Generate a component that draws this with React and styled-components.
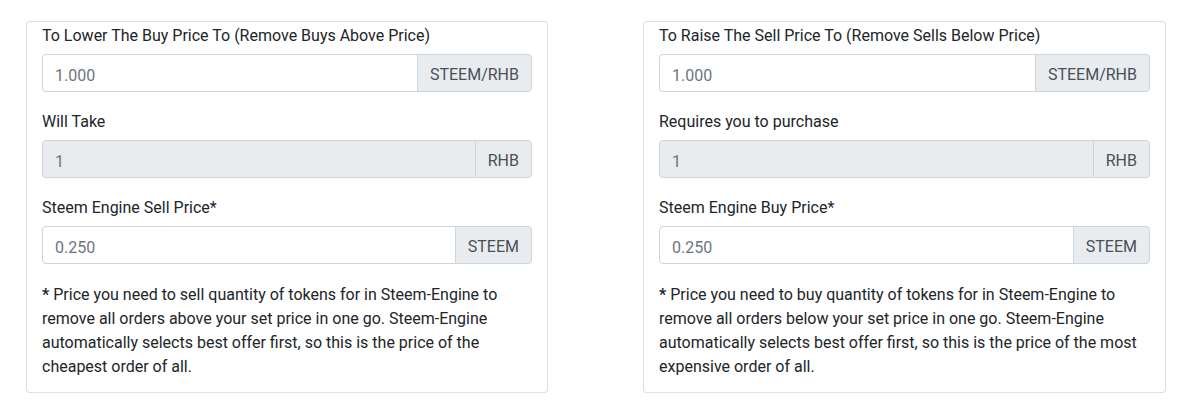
import React from "react";
import styled, { createGlobalStyle } from "styled-components";

const GlobalStyle = createGlobalStyle`
  html, body {
    margin: 0;
    padding: 0;
    background: #ffffff;
  }
  body {
    font-family: Roboto, "Liberation Sans", Arial, sans-serif;
    font-size: 16px;
    line-height: 24px;
    color: #212529;
  }
  * { box-sizing: border-box; }
`;

const Page = styled.div`
  display: grid;
  grid-template-columns: 522px 523px;
  column-gap: 95px;
  padding: 21px 0 0 26px;
  align-items: start;
`;

const Card = styled.div`
  border: 1px solid rgba(0, 0, 0, 0.125);
  border-radius: 4px;
  padding: 0 15px;
  background: #fff;
`;

const Group = styled.div`
  margin-bottom: 16px;
`;

const Label = styled.label`
  display: block;
  padding-top: 2px;
  margin-bottom: 6px;
  color: #212529;
`;

const InputGroup = styled.div`
  display: flex;
  align-items: stretch;
  width: 100%;
`;

const Input = styled.input`
  flex: 1 1 auto;
  min-width: 0;
  height: 38px;
  padding: 8px 12px 4px;
  font-family: inherit;
  font-size: 16px;
  line-height: 24px;
  color: #495057;
  background: ${(p) => (p.disabled ? "#e9ecef" : "#fff")};
  border: 1px solid #ced4da;
  border-radius: 4px 0 0 4px;
  outline: none;
  &::placeholder {
    color: #6c757d;
    opacity: 1;
  }
`;

const Addon = styled.span`
  display: flex;
  align-items: center;
  margin-left: -1px;
  padding: 8px 12px 4px;
  font-size: 16px;
  line-height: 24px;
  color: #495057;
  background: #e9ecef;
  border: 1px solid #ced4da;
  border-radius: 0 4px 4px 0;
  white-space: nowrap;
`;

const Note = styled.p`
  margin: 0 0 13px;
  padding-top: 3px;
  line-height: 24px;
  color: #212529;
`;

const Star = styled.b`
  font-weight: 700;
  margin-right: 4px;
`;

function Field({ label, value, unit, disabled }) {
  return (
    <Group>
      <Label>{label}</Label>
      <InputGroup>
        <Input placeholder={value} disabled={disabled} readOnly />
        <Addon>{unit}</Addon>
      </InputGroup>
    </Group>
  );
}

const panels = [
  {
    title: "To Lower The Buy Price To (Remove Buys Above Price)",
    middle: "Will Take",
    price: "Steem Engine Sell Price*",
    note:
      "Price you need to sell quantity of tokens for in Steem-Engine to remove all orders above your set price in one go. Steem-Engine automatically selects best offer first, so this is the price of the cheapest order of all.",
  },
  {
    title: "To Raise The Sell Price To (Remove Sells Below Price)",
    middle: "Requires you to purchase",
    price: "Steem Engine Buy Price*",
    note:
      "Price you need to buy quantity of tokens for in Steem-Engine to remove all orders below your set price in one go. Steem-Engine automatically selects best offer first, so this is the price of the most expensive order of all.",
  },
];

export default function App() {
  return (
    <>
      <GlobalStyle />
      <Page>
        {panels.map((p) => (
          <Card key={p.title}>
            <Field label={p.title} value="1.000" unit="STEEM/RHB" />
            <Field label={p.middle} value="1" unit="RHB" disabled />
            <Field label={p.price} value="0.250" unit="STEEM" />
            <Note>
              <Star>*</Star>
              {p.note}
            </Note>
          </Card>
        ))}
      </Page>
    </>
  );
}
